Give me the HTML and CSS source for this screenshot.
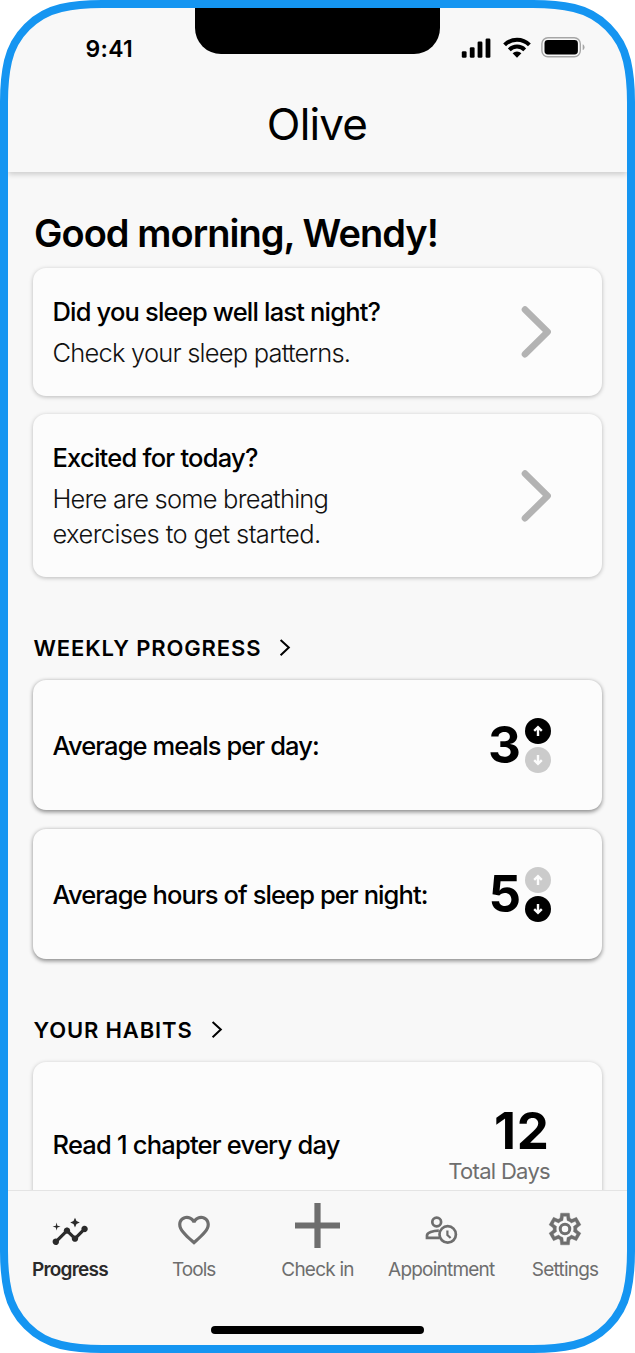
FILE: index.html
```html
<!DOCTYPE html>
<html lang="en">
<head>
<meta charset="utf-8">
<title>Olive</title>
<link rel="stylesheet" href="styles.css">
</head>
<body>
<div class="phone">
  <header class="header">
    <div class="notch"></div>
    <div class="status">
      <span class="time">9:41</span>
      <svg class="status-icons" width="124" height="24" viewBox="0 0 124 24">
        <rect x="0.8" y="15.2" width="4.8" height="6.6" rx="1.3"/>
        <rect x="8.8" y="11.2" width="4.8" height="10.6" rx="1.3"/>
        <rect x="16.6" y="5.5" width="4.8" height="16.3" rx="1.3"/>
        <rect x="24.6" y="2.5" width="4.8" height="19.3" rx="1.3"/>
        <path d="M43.6 8.9a17.5 17.5 0 0 1 24.8 0M48.3 13.8a10.9 10.9 0 0 1 15.4 0" fill="none" stroke="#000" stroke-width="4"/>
        <path d="M51.6 17.2a6.3 6.3 0 0 1 8.8 0L56 21.8z"/>
        <rect x="80.9" y="1.8" width="38.4" height="18.9" rx="6" fill="none" stroke="#a6a6a6" stroke-width="1.4"/>
        <rect x="83.5" y="4.1" width="33.4" height="14.3" rx="3.4"/>
        <path d="M121.7 8.3c2.4 1 2.4 4.8 0 5.8z" fill="#a6a6a6"/>
      </svg>
    </div>
    <h1 class="brand">Olive</h1>
  </header>

  <main class="content">
    <h2 class="greeting">Good morning, Wendy!</h2>
    <section class="stack prompts">
      <a class="card prompt">
        <div class="prompt-text">
          <h3 class="card-title t-sleep">Did you sleep well last night?</h3>
          <p class="desc">Check your sleep patterns.</p>
        </div>
        <svg class="chevron" width="31" height="52" viewBox="0 0 31 52"><path d="M5 3.6L27.6 25.9 5 48.2"/></svg>
      </a>
      <a class="card prompt">
        <div class="prompt-text">
          <h3 class="card-title t-today">Excited for today?</h3>
          <p class="desc desc-breath">Here are some breathing<br><span class="desc-end">exercises to get started.</span></p>
        </div>
        <svg class="chevron" width="31" height="52" viewBox="0 0 31 52"><path d="M5 3.6L27.6 25.9 5 48.2"/></svg>
      </a>
    </section>

    <h2 class="section-title">WEEKLY PROGRESS
      <svg class="go" width="12" height="18" viewBox="0 0 12 18"><path d="M1.6 1L9.8 8.6l-8.2 7.6"/></svg>
    </h2>
    <section class="stack stats">
      <div class="card stat">
        <h3 class="card-title t-avg">Average meals per day:</h3>
        <div class="metric">
          <span class="number">3</span>
          <div class="trend">
            <span class="dot on"><svg width="12" height="12" viewBox="0 0 12 12"><path d="M6 11V2.6M2.2 5.8L6 2.2l3.8 3.6"/></svg></span>
            <span class="dot"><svg width="12" height="12" viewBox="0 0 12 12"><path d="M6 1v8.4M2.2 6.2L6 9.8l3.8-3.6"/></svg></span>
          </div>
        </div>
      </div>
      <div class="card stat">
        <h3 class="card-title t-avg">Average hours of sleep per night:</h3>
        <div class="metric">
          <span class="number">5</span>
          <div class="trend">
            <span class="dot"><svg width="12" height="12" viewBox="0 0 12 12"><path d="M6 11V2.6M2.2 5.8L6 2.2l3.8 3.6"/></svg></span>
            <span class="dot on"><svg width="12" height="12" viewBox="0 0 12 12"><path d="M6 1v8.4M2.2 6.2L6 9.8l3.8-3.6"/></svg></span>
          </div>
        </div>
      </div>
    </section>

    <h2 class="section-title">YOUR HABITS
      <svg class="go" width="12" height="18" viewBox="0 0 12 18"><path d="M1.6 1L9.8 8.6l-8.2 7.6"/></svg>
    </h2>
    <section class="stack">
      <div class="card habit">
        <h3 class="card-title">Read 1 chapter every day</h3>
        <div class="total">
          <span class="number days">12</span>
          <span class="total-label">Total Days</span>
        </div>
      </div>
    </section>
  </main>

  <nav class="tabs">
    <a class="tab active">
      <span class="tab-icon"><svg class="i-progress" width="38.4" height="38.4" viewBox="0 0 24 24"><path d="M21 8c-1.45 0-2.26 1.44-1.93 2.51l-3.55 3.56c-.3-.09-.74-.09-1.04 0l-2.55-2.55C12.27 10.45 11.46 9 10 9c-1.45 0-2.27 1.44-1.93 2.52l-4.56 4.55C2.44 15.74 1 16.55 1 18c0 1.1.9 2 2 2 1.45 0 2.26-1.44 1.93-2.51l4.55-4.56c.3.09.74.09 1.04 0l2.55 2.55C12.73 16.55 13.54 18 15 18c1.45 0 2.27-1.44 1.93-2.52l3.56-3.55c1.07.33 2.51-.48 2.51-1.93 0-1.1-.9-2-2-2z"/><path d="M15 9l.94-2.07L18 6l-2.06-.93L15 3l-.92 2.07L12 6l2.08.93zM3.5 11l.5-2 2-.5L4 8l-.5-2L3 8l-2 .5L3 9z"/></svg></span>
      <span class="tab-label">Progress</span>
    </a>
    <a class="tab">
      <span class="tab-icon"><svg class="i-tools" width="38" height="38" viewBox="0 0 24 24"><path d="M16.5 3c-1.74 0-3.41.81-4.5 2.09C10.91 3.81 9.24 3 7.5 3 4.42 3 2 5.42 2 8.5c0 3.78 3.4 6.86 8.55 11.54L12 21.35l1.45-1.32C18.6 15.36 22 12.28 22 8.5 22 5.42 19.58 3 16.5 3zm-4.4 15.55l-.1.1-.1-.1C7.14 14.24 4 11.39 4 8.5 4 6.5 5.5 5 7.5 5c1.54 0 3.04.99 3.57 2.36h1.87C13.46 5.99 14.96 5 16.5 5c2 0 3.5 1.5 3.5 3.5 0 2.89-3.14 5.74-7.9 10.05z"/></svg></span>
      <span class="tab-label tight">Tools</span>
    </a>
    <a class="tab">
      <span class="tab-icon"><svg class="i-plus" width="45" height="45" viewBox="0 0 45 45"><path d="M19.4 0h6.2v19.4H45v6.2H25.6V45h-6.2V25.6H0v-6.2h19.4z"/></svg></span>
      <span class="tab-label">Check in</span>
    </a>
    <a class="tab">
      <span class="tab-icon"><svg class="i-appt" width="34" height="32" viewBox="0 0 34 32"><g fill="none" stroke="currentColor" stroke-width="2.7"><circle cx="12.7" cy="8" r="4.4"/><circle cx="23.7" cy="20.4" r="8.2"/><path d="M15.6 23.8H3V21.6C3 18.6 9 16.8 14.8 16.7"/><path d="M23.4 16.4v4.6l3.2 3" stroke-width="2.2"/></g></svg></span>
      <span class="tab-label">Appointment</span>
    </a>
    <a class="tab">
      <span class="tab-icon"><svg class="i-gear" width="38" height="38" viewBox="0 0 24 24"><path stroke="currentColor" stroke-width=".25" fill-rule="evenodd" d="m9.25 22-.4-3.2q-.325-.125-.612-.3-.288-.175-.563-.375L4.7 19.375l-2.75-4.75 2.575-1.95Q4.5 12.5 4.5 12.337v-.675q0-.162.025-.337L1.95 9.375l2.75-4.75 2.975 1.25q.275-.2.575-.375.3-.175.6-.3l.4-3.2h5.5l.4 3.2q.325.125.613.3.287.175.562.375l2.975-1.25 2.75 4.75-2.575 1.95q.025.175.025.337v.675q0 .163-.05.338l2.575 1.95-2.75 4.75-2.95-1.25q-.275.2-.575.375-.3.175-.6.3l-.4 3.2ZM11 20h1.975l.35-2.65q.775-.2 1.437-.587.663-.388 1.213-.938l2.475 1.025.975-1.7-2.15-1.625q.125-.35.175-.738.05-.387.05-.787t-.05-.788q-.05-.387-.175-.737l2.15-1.625-.975-1.7-2.475 1.05q-.55-.575-1.213-.963-.662-.387-1.437-.587L13 4h-1.975l-.35 2.65q-.775.2-1.437.587-.663.388-1.213.938L5.55 7.15l-.975 1.7 2.15 1.6q-.125.375-.175.75-.05.375-.05.8 0 .4.05.775t.175.75l-2.15 1.625.975 1.7 2.475-1.05q.55.575 1.213.963.662.387 1.437.587Z"/><circle cx="12" cy="12" r="3" fill="none" stroke="currentColor" stroke-width="1.9"/></svg></span>
      <span class="tab-label">Settings</span>
    </a>
    <span class="home-bar"></span>
  </nav>

  <svg class="bezel" width="635" height="1353" viewBox="0 0 635 1353">
    <path fill="#fff" fill-rule="evenodd" d="M0 0H635V1353H0ZM4 102C4 83 5 74 8 61 14 35 35 14 61 8 74 5 83 4 102 4H533C552 4 561 5 574 8 600 14 621 35 627 61 630 74 631 83 631 102V1251C631 1270 630 1279 627 1292 621 1318 600 1339 574 1345 561 1348 552 1349 533 1349H102C83 1349 74 1348 61 1345 35 1339 14 1318 8 1292 5 1279 4 1270 4 1251Z"/>
    <path fill="none" stroke="#1595f1" stroke-width="8" d="M4 102C4 83 5 74 8 61 14 35 35 14 61 8 74 5 83 4 102 4H533C552 4 561 5 574 8 600 14 621 35 627 61 630 74 631 83 631 102V1251C631 1270 630 1279 627 1292 621 1318 600 1339 574 1345 561 1348 552 1349 533 1349H102C83 1349 74 1348 61 1345 35 1339 14 1318 8 1292 5 1279 4 1270 4 1251Z"/>
  </svg>
</div>
</body>
</html>
```
FILE: styles.css
```css
* { box-sizing: border-box; }
body {
  margin: 0;
  background: #fff;
  font-family: Inter, "Liberation Sans", sans-serif;
  color: #000;
}
h1, h2, h3, p { margin: 0; font-weight: inherit; }

.phone {
  position: relative;
  display: flex;
  flex-direction: column;
  width: 635px;
  height: 1353px;
  padding: 8px;
  overflow: hidden;
  background: #f8f8f8;
}
.bezel { position: absolute; inset: 0; z-index: 2; pointer-events: none; }

.header {
  position: relative;
  z-index: 1;
  flex: none;
  height: 164px;
  background: #f8f8f8;
  box-shadow: 0 2px 6px rgba(0, 0, 0, .2);
}
.notch {
  position: absolute;
  top: 0;
  left: 187px;
  width: 245px;
  height: 46px;
  background: #000;
  border-radius: 0 0 26px 26px;
}
.status {
  display: flex;
  justify-content: space-between;
  align-items: center;
  height: 80px;
  padding: 0 42px 0 77.5px;
}
.time { font-size: 23px; font-weight: 600; letter-spacing: .3px; line-height: 28px; padding-top: 2px; }
.brand {
  font-size: 44px;
  font-weight: 400;
  line-height: 72px;
  letter-spacing: -.83px;
  text-align: center;
  padding-right: 1px;
}

.content {
  flex: 1;
  min-height: 0;
  overflow: hidden;
  padding: 37px 25px 0;
}
.greeting {
  padding-left: 1px;
  font-size: 38px;
  font-weight: 600;
  line-height: 49px;
  letter-spacing: -.96px;
  margin-bottom: 10px;
}
.stack { display: flex; flex-direction: column; gap: 18px; }
.card {
  display: flex;
  justify-content: space-between;
  align-items: center;
  padding: 0 51px 0 19.5px;
  background: #fcfcfc;
  border-radius: 13px;
  box-shadow: 0 1px 4px rgba(0, 0, 0, .26);
}
.prompt { padding-top: 26px; padding-bottom: 26px; }
.card-title {
  font-size: 25.5px;
  font-weight: 500;
  line-height: 35px;
  letter-spacing: -.79px;
}
.t-sleep { letter-spacing: -.82px; }
.t-today { letter-spacing: -.77px; }
.t-avg { letter-spacing: -.91px; }
.desc {
  margin-top: 6px;
  font-size: 25.5px;
  font-weight: 300;
  line-height: 35px;
  letter-spacing: -.79px;
  color: #111;
}
.desc-breath { letter-spacing: -.78px; }
.desc-end { letter-spacing: -.6px; }
.chevron path {
  fill: none;
  stroke: #b3b3b3;
  stroke-width: 6.6;
  stroke-linecap: round;
  stroke-linejoin: round;
}

.section-title {
  display: flex;
  align-items: center;
  gap: 18px;
  padding-left: .5px;
  font-size: 22px;
  font-weight: 600;
  line-height: 28px;
  letter-spacing: .86px;
  margin: 57px 0 18px;
}
.go path { fill: none; stroke: #000; stroke-width: 2; }

.stats { gap: 19px; }
.stat { height: 130px; box-shadow: 0 1.5px 4px rgba(0, 0, 0, .45); }
.metric { display: flex; align-items: center; gap: 4px; }
.number { font-size: 51px; font-weight: 700; line-height: 50px; }
.trend { display: flex; flex-direction: column; gap: 3px; }
.dot {
  display: flex;
  align-items: center;
  justify-content: center;
  width: 26px;
  height: 26px;
  border-radius: 50%;
  background: #cbcbcb;
}
.dot.on { background: #000; }
.dot path { fill: none; stroke: #fcfcfc; stroke-width: 2.4; }

.habit { height: 165px; padding-right: 52px; }
.total { display: flex; flex-direction: column; align-items: flex-end; padding-top: 4px; }
.days { letter-spacing: 1px; }
.total-label { font-size: 22px; line-height: 31px; letter-spacing: -.7px; color: #6e6e6e; }

.tabs {
  position: relative;
  flex: none;
  display: grid;
  grid-template-columns: repeat(5, 1fr);
  height: 155px;
  border-top: 1px solid #e4e4e4;
  background: #f8f8f8;
}
.tab { display: flex; flex-direction: column; align-items: center; color: #6e6e6e; }
.tab-icon { display: flex; align-items: center; justify-content: center; height: 68px; }
.tab-icon svg { fill: currentColor; }
.i-progress { margin-top: 15px; }
.i-tools { margin-top: 10px; }
.i-plus { margin-top: 1px; }
.i-appt { margin-top: 10px; }
.i-gear { margin-top: 8px; }
.tab-label { margin-top: -1px; font-size: 19px; line-height: 24px; letter-spacing: -.78px; }
.tab-label.tight { letter-spacing: -1px; }
.active { color: #2a2a2a; }
.active .tab-label { font-weight: 600; }
.home-bar {
  position: absolute;
  left: 203px;
  bottom: 11px;
  width: 213px;
  height: 8px;
  border-radius: 4px;
  background: #000;
}
```
